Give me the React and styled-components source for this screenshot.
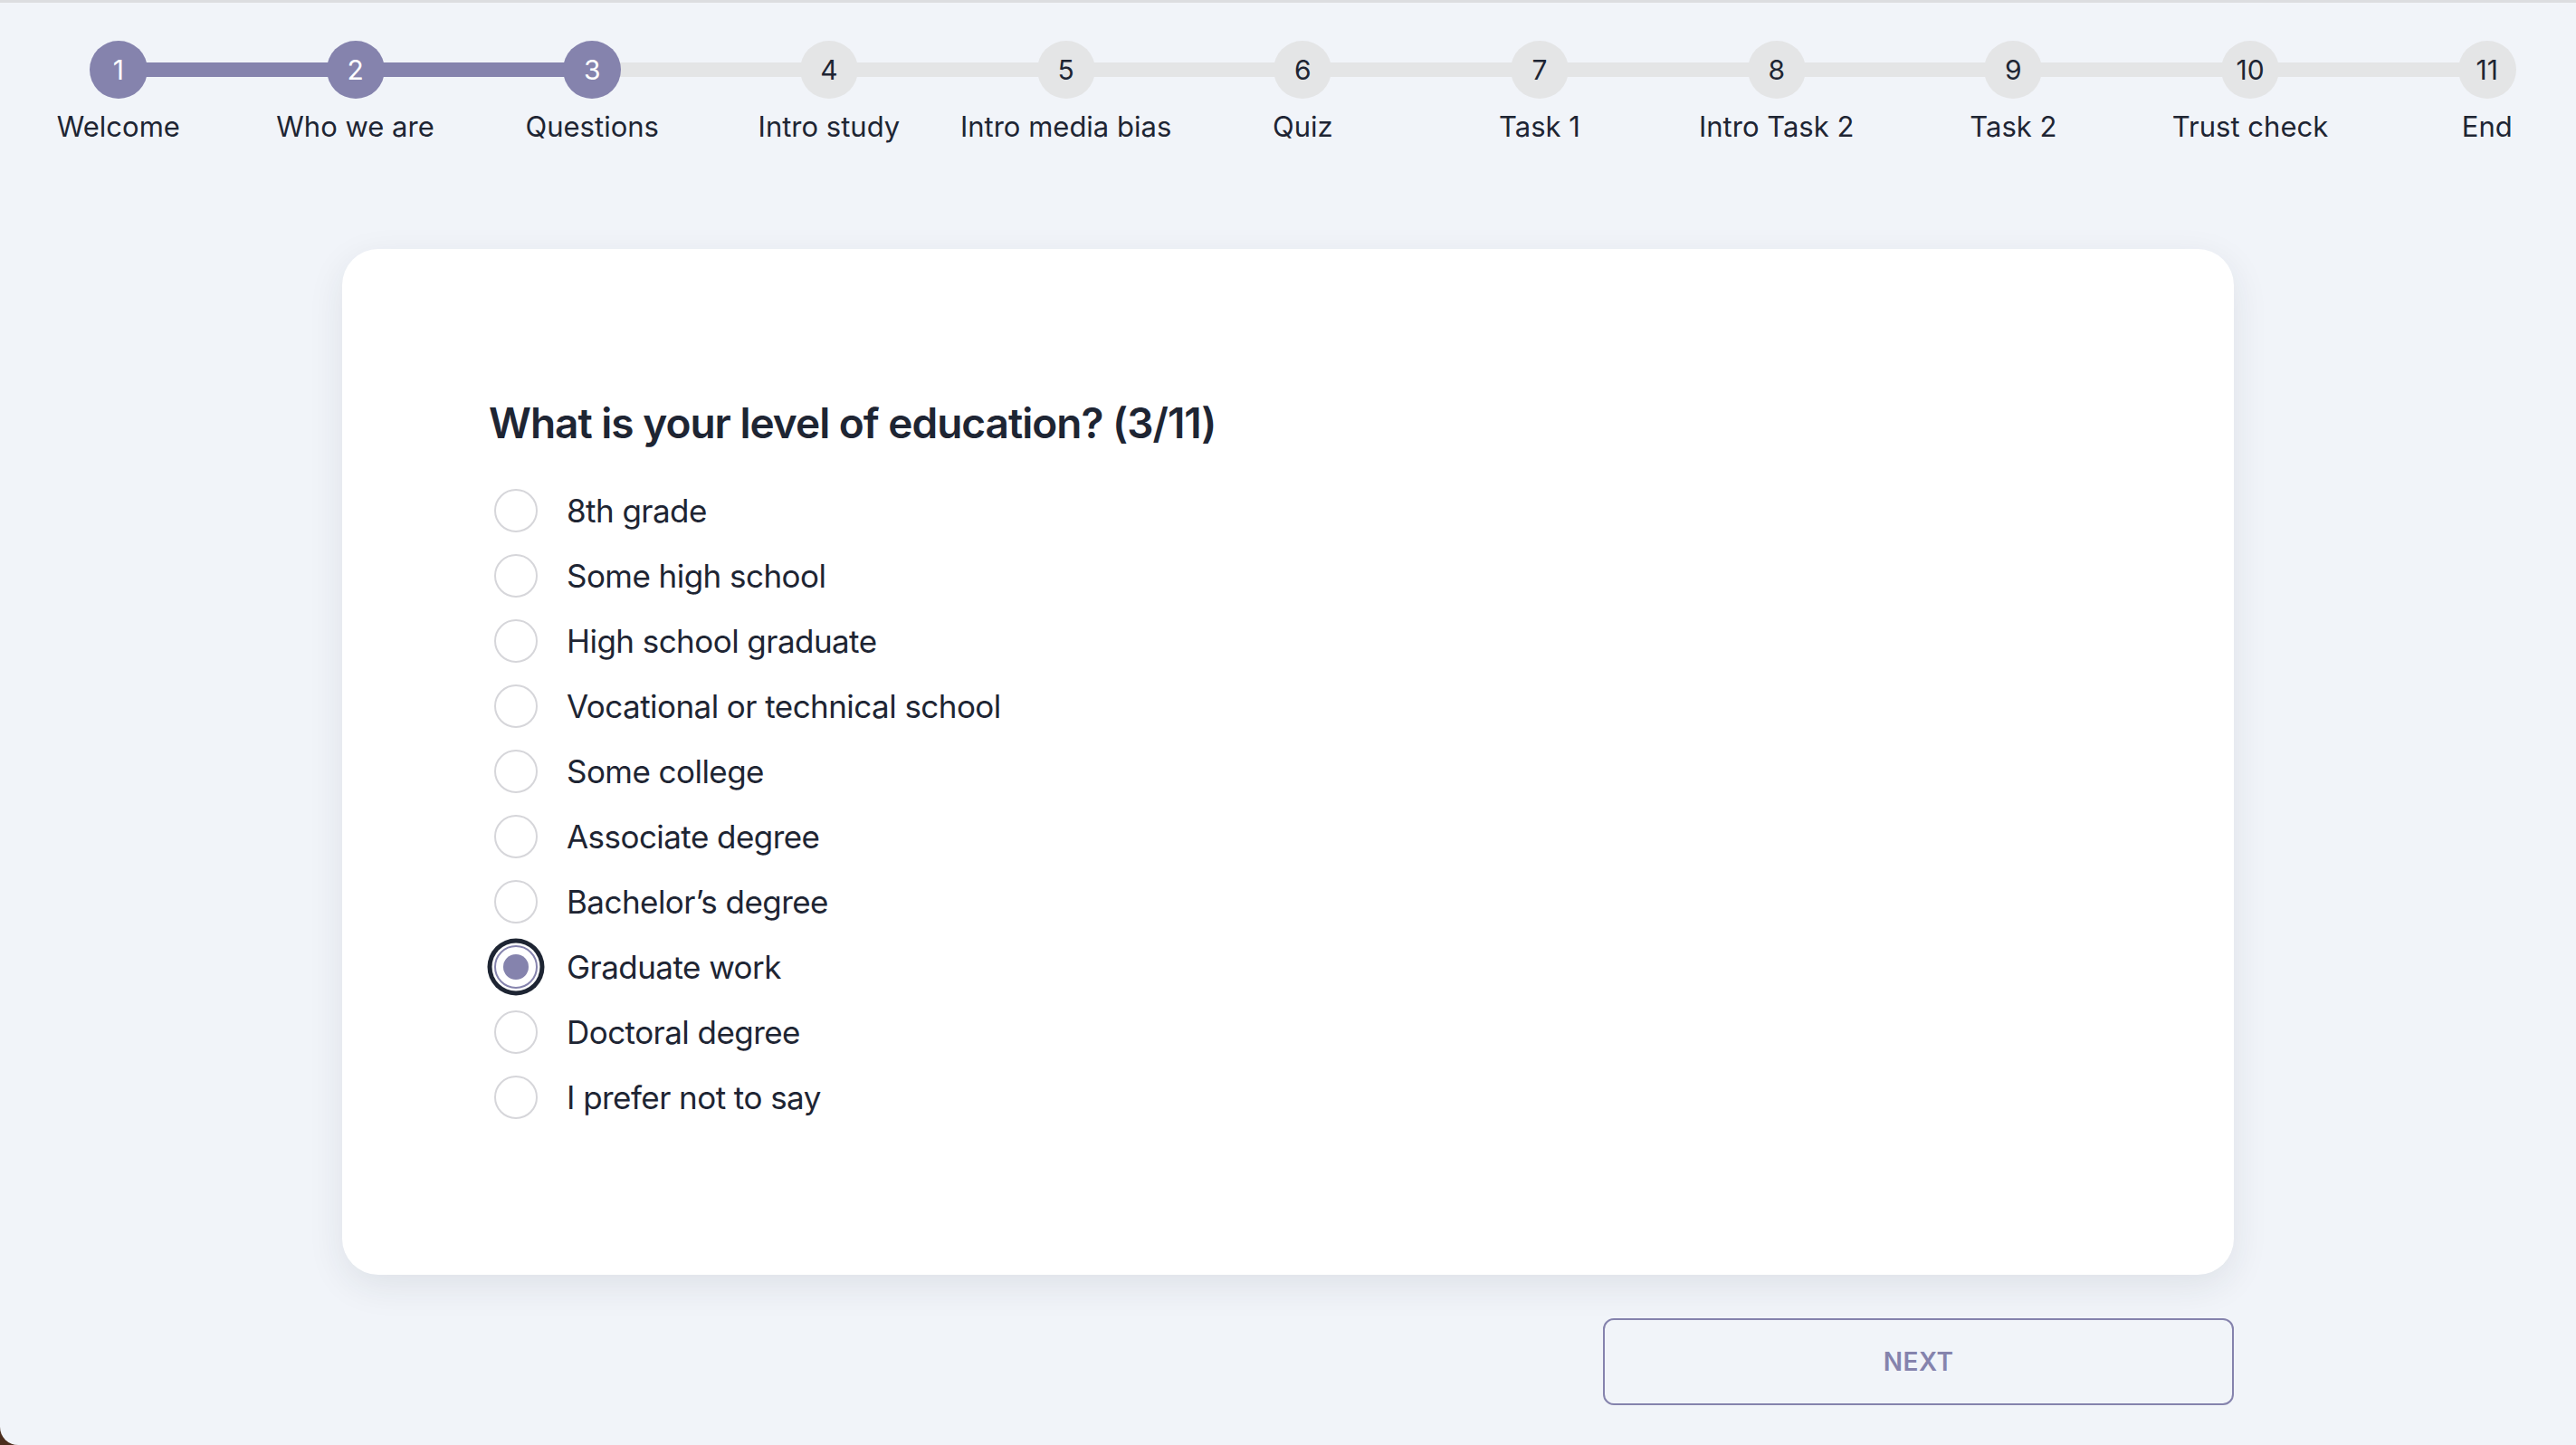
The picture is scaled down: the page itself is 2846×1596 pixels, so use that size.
import React, { useState } from 'react';
import styled, { createGlobalStyle } from 'styled-components';

const PURPLE = '#8583ad';
const INK = '#1e2533';

const GlobalStyle = createGlobalStyle`
  html, body {
    margin: 0;
    padding: 0;
    background: #4b2d1d;
    overflow: hidden;
  }

  * {
    box-sizing: border-box;
  }
`;

const Page = styled.div`
  min-height: 100vh;
  background: #f1f4f9;
  border-top: 3px solid #dcdde0;
  border-bottom-left-radius: 20px;
  overflow: hidden;
  font-family: Inter, 'Liberation Sans', sans-serif;
  color: ${INK};
`;

const Stepper = styled.ol`
  display: grid;
  grid-template-columns: repeat(11, 261.7px);
  margin: 0;
  padding: 42px 0 0;
  list-style: none;
`;

const Step = styled.li`
  position: relative;
  display: flex;
  flex-direction: column;
  align-items: center;
`;

const Connector = styled.span`
  position: absolute;
  top: 24px;
  left: calc(-50% + 20px);
  right: calc(50% + 20px);
  height: 16px;
  background: ${(p) => (p.$done ? PURPLE : '#e4e5e6')};
`;

const StepCircle = styled.span`
  position: relative;
  z-index: 1;
  display: flex;
  align-items: center;
  justify-content: center;
  width: 64px;
  height: 64px;
  border-radius: 50%;
  background: ${(p) => (p.$done ? PURPLE : '#e4e5e6')};
  color: ${(p) => (p.$done ? '#fff' : INK)};
  font-size: 30px;
`;

const StepLabel = styled.span`
  margin-top: 12px;
  font-size: 31px;
  line-height: 1.2;
  white-space: nowrap;
`;

const Main = styled.main`
  width: 2090px;
  margin: 117px auto 0;
`;

const Card = styled.section`
  background: #fff;
  border-radius: 40px;
  padding: 164px 162px 160px;
  box-shadow: 0 12px 40px rgba(30, 40, 60, 0.09);
`;

const Question = styled.h2`
  margin: 0 0 31px;
  font-size: 46px;
  font-weight: 600;
  letter-spacing: -1px;
  line-height: 1.25;
`;

const Options = styled.div`
  display: flex;
  flex-direction: column;
`;

const Option = styled.label`
  display: flex;
  align-items: center;
  gap: 32px;
  height: 72px;
  cursor: pointer;
  font-size: 35px;
  letter-spacing: -0.55px;
`;

const Radio = styled.input`
  appearance: none;
  margin: 0 0 0 6px;
  width: 48px;
  height: 48px;
  border-radius: 50%;
  border: 2.5px solid #d6d6da;
  background: #fff;
  display: grid;
  place-items: center;
  cursor: pointer;

  &::before {
    content: '';
    width: 28px;
    height: 28px;
    border-radius: 50%;
    background: ${PURPLE};
    transform: scale(0);
  }

  &:checked {
    border-color: ${PURPLE};
    box-shadow: 0 0 0 2.5px #fff, 0 0 0 7.5px ${INK};
  }

  &:checked::before {
    transform: scale(1);
  }
`;

const Actions = styled.div`
  display: grid;
  grid-template-columns: repeat(3, 1fr);
  margin-top: 48px;
`;

const NextButton = styled.button`
  grid-column: 3;
  height: 96px;
  border: 2px solid ${PURPLE};
  border-radius: 12px;
  background: transparent;
  color: ${PURPLE};
  font-family: Inter, 'Liberation Sans', sans-serif;
  font-size: 28px;
  font-weight: 600;
  letter-spacing: 0.5px;
  cursor: pointer;
`;

const steps = [
  'Welcome',
  'Who we are',
  'Questions',
  'Intro study',
  'Intro media bias',
  'Quiz',
  'Task 1',
  'Intro Task 2',
  'Task 2',
  'Trust check',
  'End',
];

const options = [
  '8th grade',
  'Some high school',
  'High school graduate',
  'Vocational or technical school',
  'Some college',
  'Associate degree',
  'Bachelor’s degree',
  'Graduate work',
  'Doctoral degree',
  'I prefer not to say',
];

const ACTIVE = 2;

const App = () => {
  const [answer, setAnswer] = useState('Graduate work');

  return (
    <Page>
      <GlobalStyle />
      <Stepper>
        {steps.map((label, i) => (
          <Step key={label}>
            {i > 0 && <Connector $done={i <= ACTIVE} />}
            <StepCircle $done={i <= ACTIVE}>{i + 1}</StepCircle>
            <StepLabel>{label}</StepLabel>
          </Step>
        ))}
      </Stepper>

      <Main>
        <Card>
          <Question>What is your level of education? (3/11)</Question>
          <Options>
            {options.map((opt) => (
              <Option key={opt}>
                <Radio
                  type='radio'
                  name='education'
                  checked={answer === opt}
                  onChange={() => setAnswer(opt)}
                />
                {opt}
              </Option>
            ))}
          </Options>
        </Card>
        <Actions>
          <NextButton type='button'>NEXT</NextButton>
        </Actions>
      </Main>
    </Page>
  );
};

export default App;
